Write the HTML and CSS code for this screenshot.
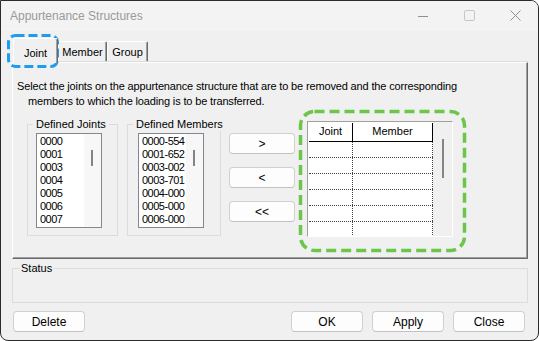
FILE: index.html
```html
<!DOCTYPE html>
<html lang="en">
<head>
    <meta charset="UTF-8">
    <title>Appurtenance Structures</title>
    <link rel="stylesheet" href="styles.css">
</head>
<body>
    <div class="window">
        <div class="titlebar">
            <span class="title">Appurtenance Structures</span>
            <div class="caption">
                <span class="cap-btn"><svg width="10" height="10" viewBox="0 0 10 10"><path d="M0 5.5H10" stroke="#8f8f8f" stroke-width="1"/></svg></span>
                <span class="cap-btn"><svg width="11" height="11" viewBox="0 0 11 11"><rect x="0.5" y="0.5" width="10" height="10" rx="1.5" fill="none" stroke="#c6c6c6"/></svg></span>
                <span class="cap-btn"><svg width="11" height="11" viewBox="0 0 11 11"><path d="M0.5 0.5L10.5 10.5M10.5 0.5L0.5 10.5" stroke="#8f8f8f" stroke-width="1"/></svg></span>
            </div>
        </div>

        <div class="content">
            <div class="tabs">
                <div class="tab active">Joint</div>
                <div class="tab">Member</div>
                <div class="tab">Group</div>
            </div>

            <div class="panel">
                <p class="desc">
                    <span class="line">Select the joints on the appurtenance structure that are to be removed and the corresponding</span>
                    <span class="line indent">members to which the loading is to be transferred.</span>
                </p>

                <div class="pickers">
                    <fieldset class="group joints">
                        <legend>Defined Joints</legend>
                        <div class="listbox">
                            <div class="items">
                                <div>0000</div><div>0001</div><div>0003</div><div>0004</div><div>0005</div><div>0006</div><div>0007</div>
                            </div>
                            <div class="vscroll"><div class="thumb"></div></div>
                        </div>
                    </fieldset>

                    <fieldset class="group members">
                        <legend>Defined Members</legend>
                        <div class="listbox">
                            <div class="items">
                                <div>0000-554</div><div>0001-652</div><div>0003-002</div><div>0003-701</div><div>0004-000</div><div>0005-000</div><div>0006-000</div>
                            </div>
                            <div class="vscroll"><div class="thumb"></div></div>
                        </div>
                    </fieldset>

                    <div class="move-buttons">
                        <button class="btn">&gt;</button>
                        <button class="btn">&lt;</button>
                        <button class="btn">&lt;&lt;</button>
                    </div>

                    <div class="grid">
                        <div class="table">
                            <div class="row head"><div class="cell c-joint">Joint</div><div class="cell c-member">Member</div></div>
                            <div class="row"><div class="cell c-joint"></div><div class="cell c-member"></div></div>
                            <div class="row"><div class="cell c-joint"></div><div class="cell c-member"></div></div>
                            <div class="row"><div class="cell c-joint"></div><div class="cell c-member"></div></div>
                            <div class="row"><div class="cell c-joint"></div><div class="cell c-member"></div></div>
                            <div class="row"><div class="cell c-joint"></div><div class="cell c-member"></div></div>
                            <div class="row"><div class="cell c-joint"></div><div class="cell c-member"></div></div>
                        </div>
                        <div class="gscroll"><div class="thumb"></div></div>
                    </div>
                </div>
            </div>

            <fieldset class="status">
                <legend>Status</legend>
                <div class="status-body"></div>
            </fieldset>

            <div class="actions">
                <button class="btn wide">Delete</button>
                <div class="actions-right">
                    <button class="btn wide">OK</button>
                    <button class="btn wide">Apply</button>
                    <button class="btn wide">Close</button>
                </div>
            </div>
        </div>
    </div>

    <!-- highlight marks drawn over the dialog -->
    <svg class="marks" width="539" height="341" viewBox="0 0 539 341">
        <rect x="8.5" y="35.5" width="49" height="31" rx="7" fill="none" stroke="#1e9cf0" stroke-width="3" stroke-dasharray="9 4"/>
        <rect x="300.5" y="111.5" width="164" height="139" rx="14" fill="none" stroke="#6cc64a" stroke-width="3.5" stroke-dasharray="10 5"/>
    </svg>
</body>
</html>
```

FILE: styles.css
```css
* {
    box-sizing: border-box;
}

body {
    margin: 0;
    position: relative;
    font-family: 'Liberation Sans', Arial, sans-serif;
    font-size: 11px;
    color: #000;
}

.window {
    width: 539px;
    height: 341px;
    border: 1px solid #2b2b2b;
    border-radius: 0 8px 8px 8px;
    background: #f0f0f0;
    overflow: hidden;
    display: flex;
    flex-direction: column;
}

/* title bar */
.titlebar {
    height: 30px;
    flex: none;
    background: #f3f3f3;
    display: flex;
    align-items: center;
    padding-left: 9px;
}

.title {
    font-size: 12px;
    color: #9a9a9a;
    flex: 1;
    padding-bottom: 1px;
}

.caption {
    display: flex;
    height: 100%;
}

.cap-btn {
    width: 46px;
    display: flex;
    align-items: center;
    justify-content: center;
    padding-bottom: 1px;
}

.content {
    flex: 1;
    display: flex;
    flex-direction: column;
    padding: 7px 10px 0 11px;
}

/* tabs */
.tabs {
    display: flex;
    align-items: flex-end;
    padding-left: 1px;
    height: 24px;
}

.tab {
    height: 21px;
    padding: 4px 0 0;
    line-height: 13px;
    text-align: center;
    border-top: 1px solid #fff;
    border-left: 1px solid #fff;
    border-right: 1px solid #696969;
    box-shadow: inset -1px 0 #a0a0a0;
    border-radius: 2px 2px 0 0;
}

.tab:nth-child(2) { width: 49px; }
.tab:nth-child(3) { width: 41px; }

.tab.active {
    width: 45px;
    height: 25px;
    padding-top: 8px;
    margin-bottom: -1px;
    background: #f0f0f0;
    position: relative;
    z-index: 1;
}

.panel {
    width: 516px;
    height: 197px;
    border-top: 1px solid #fff;
    border-left: 1px solid #fff;
    border-right: 1px solid #696969;
    border-bottom: 1px solid #696969;
    box-shadow: inset -1px -1px #a0a0a0, 0 -1px #dcdcdc;
    padding: 16px 0 0 14px;
}

.desc {
    margin: 0 0 9px -10px;
    line-height: 15px;
    font-size: 11px;
    letter-spacing: -0.15px;
    white-space: nowrap;
}

.desc .line {
    display: block;
}

.desc .indent {
    padding-left: 11px;
}

.pickers {
    display: flex;
    align-items: flex-start;
}

/* group boxes */
.group {
    margin: 0;
    border: 1px solid #dcdcdc;
    padding: 2px 0 7px 5px;
    min-width: 0;
}

.group legend {
    padding: 0 3px;
    line-height: 13px;
    white-space: nowrap;
}

.joints {
    width: 91px;
    margin-right: 9px;
}

.joints .listbox {
    margin-left: 3px;
}

.members {
    width: 94px;
    margin-right: 8px;
}

.members legend {
    padding-right: 0;
}

.members .listbox {
    margin-left: 5px;
}

.listbox {
    width: 66px;
    height: 95px;
    border: 1px solid #828790;
    background: #fff;
    display: flex;
}

.items {
    flex: 1;
    overflow: hidden;
    white-space: nowrap;
    padding: 1px 0 0 3px;
    line-height: 13px;
    letter-spacing: -0.5px;
}

.vscroll {
    width: 17px;
    background: #f7f7f7;
    flex: none;
}

.vscroll .thumb {
    width: 2px;
    height: 16px;
    margin: 16px 0 0 7px;
    background: #858585;
}

/* buttons */
.btn {
    font-family: 'Liberation Sans', Arial, sans-serif;
    font-size: 12px;
    color: #000;
    background: #fdfdfd;
    border: 1px solid #d0d0d0;
    border-bottom-color: #c2c2c2;
    border-radius: 4px;
    height: 21px;
    padding: 0;
}

.move-buttons {
    display: flex;
    flex-direction: column;
    gap: 13px;
    margin-top: 15px;
    margin-right: 12px;
}

.move-buttons .btn {
    width: 66px;
}

/* joint/member grid */
.grid {
    margin-top: 3px;
    width: 146px;
    height: 116px;
    display: flex;
    border-top: 1px solid #a0a0a0;
    border-left: 1px solid #a0a0a0;
    border-right: 1px solid #fff;
    border-bottom: 1px solid #fff;
    box-shadow: inset 1px 1px #6e6e6e;
}

.table {
    width: 125px;
    background: #fff;
    overflow: hidden;
    padding: 1px 0 0 1px;
}

.row {
    display: flex;
    height: 16px;
    border-bottom: 1px dotted #444;
}

.row.head {
    height: 19px;
    border-bottom: 1px solid #000;
}

.cell {
    height: 100%;
    border-right: 1px dotted #444;
}

.head .cell {
    border-right: 1px solid #000;
    text-align: center;
    line-height: 17px;
    font-size: 11px;
}

.c-joint { width: 44px; }
.c-member { width: 80px; }

.gscroll {
    flex: 1;
    background: #f0f0f0;
}

.gscroll .thumb {
    width: 2px;
    height: 39px;
    margin: 17px 0 0 9px;
    background: #858585;
}

/* status */
.status {
    margin: 3px 0 0 0;
    width: 516px;
    border: 1px solid #dcdcdc;
    padding: 0 0 0 7px;
    min-width: 0;
}

.status legend {
    padding: 0 1px;
    line-height: 13px;
}

.status-body {
    height: 27px;
}

.actions {
    display: flex;
    justify-content: space-between;
    margin-top: 8px;
    padding: 0 3px 0 1px;
}

.actions-right {
    display: flex;
    gap: 9px;
}

.btn.wide {
    width: 72px;
}

.marks {
    position: absolute;
    top: 0;
    left: 0;
    pointer-events: none;
}
```
